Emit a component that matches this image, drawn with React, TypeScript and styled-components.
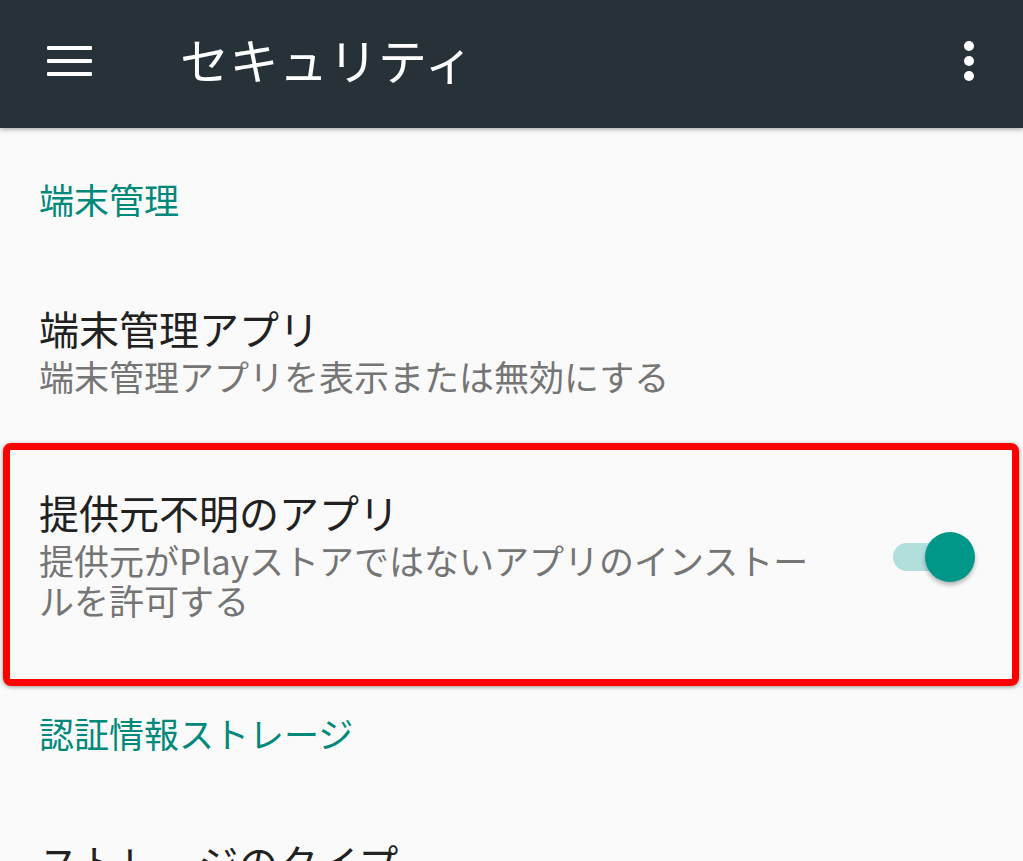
import React from 'react';
import styled, { createGlobalStyle } from 'styled-components';

const GlobalStyle = createGlobalStyle`
  html, body {
    margin: 0;
    padding: 0;
    background: #fafafa;
    overflow: hidden;
  }
  body {
    font-family: "Noto Sans CJK JP", "Roboto", sans-serif;
  }
`;

const Screen = styled.div`
  width: 1023px;
  height: 861px;
  background: #fafafa;
  overflow: hidden;
  display: flex;
  flex-direction: column;
`;

const Toolbar = styled.header`
  position: relative;
  z-index: 2;
  height: 128px;
  box-sizing: border-box;
  padding: 0 49px 6px 47px;
  background: #263238;
  box-shadow: 0 2px 4px rgba(0, 0, 0, 0.28);
  display: flex;
  align-items: center;
  flex-shrink: 0;
`;

const IconButton = styled.div`
  display: flex;
  align-items: center;
  justify-content: center;
  flex-shrink: 0;
`;

const ToolbarTitle = styled.h1`
  flex: 1;
  margin: -4px 0 0 88px;
  font-size: 49px;
  font-weight: 400;
  line-height: 60px;
  color: #ffffff;
  letter-spacing: 0.5px;
`;

const List = styled.div`
  padding-top: 9px;
  display: flex;
  flex-direction: column;
`;

const Category = styled.div`
  padding: 38px 39px 40px;
  font-size: 35px;
  line-height: 48px;
  color: #00897b;
`;

const Row = styled.div<{ $highlight?: boolean }>`
  position: relative;
  display: flex;
  align-items: center;
  padding: 41px 48px 51px 39px;

  ${props => props.$highlight && `
    &::after {
      content: '';
      position: absolute;
      top: -4px;
      bottom: -15px;
      left: 3px;
      right: 4px;
      border: 7px solid #ff0000;
      border-radius: 8px;
      box-shadow: 0 1px 4px rgba(0, 0, 0, 0.4);
      pointer-events: none;
    }
  `}
`;

const RowText = styled.div`
  flex: 1;
  min-width: 0;
  display: flex;
  flex-direction: column;
  gap: 4px;
`;

const RowTitle = styled.div`
  font-size: 40px;
  line-height: 48px;
  color: #212121;
`;

const RowSummary = styled.div`
  font-size: 35px;
  line-height: 40px;
  color: #757575;
`;

const SwitchFrame = styled.div`
  position: relative;
  width: 82px;
  height: 50px;
  margin-left: 70px;
  margin-top: 6px;
  flex-shrink: 0;
  display: flex;
  align-items: center;
`;

const SwitchTrack = styled.div<{ $on: boolean }>`
  width: 64px;
  height: 28px;
  border-radius: 14px;
  background: ${props => (props.$on ? '#b2dfdb' : '#bdbdbd')};
`;

const SwitchThumb = styled.div<{ $on: boolean }>`
  position: absolute;
  top: 0;
  left: ${props => (props.$on ? '32px' : '0')};
  width: 50px;
  height: 50px;
  border-radius: 50%;
  background: ${props => (props.$on ? '#009688' : '#f1f1f1')};
  box-shadow: 0 3px 4px rgba(0, 0, 0, 0.28);
`;

const MenuIcon = () => (
  <svg width="45" height="30" viewBox="0 0 45 30">
    <rect x="0" y="0" width="45" height="4" rx="1" fill="#fff" />
    <rect x="0" y="13" width="45" height="4" rx="1" fill="#fff" />
    <rect x="0" y="26" width="45" height="4" rx="1" fill="#fff" />
  </svg>
);

const MoreIcon = () => (
  <svg width="10" height="40" viewBox="0 0 10 40">
    <circle cx="5" cy="5" r="5" fill="#fff" />
    <circle cx="5" cy="20" r="5" fill="#fff" />
    <circle cx="5" cy="35" r="5" fill="#fff" />
  </svg>
);

const Switch: React.FC<{ on: boolean }> = ({ on }) => (
  <SwitchFrame>
    <SwitchTrack $on={on} />
    <SwitchThumb $on={on} />
  </SwitchFrame>
);

const App: React.FC = () => {
  return (
    <Screen>
      <GlobalStyle />
      <Toolbar>
        <IconButton>
          <MenuIcon />
        </IconButton>
        <ToolbarTitle>セキュリティ</ToolbarTitle>
        <IconButton>
          <MoreIcon />
        </IconButton>
      </Toolbar>

      <List>
        <Category>端末管理</Category>

        <Row>
          <RowText>
            <RowTitle>端末管理アプリ</RowTitle>
            <RowSummary>端末管理アプリを表示または無効にする</RowSummary>
          </RowText>
        </Row>

        <Row $highlight>
          <RowText>
            <RowTitle>提供元不明のアプリ</RowTitle>
            <RowSummary>
              提供元がPlayストアではないアプリのインストールを許可する
            </RowSummary>
          </RowText>
          <Switch on />
        </Row>

        <Category>認証情報ストレージ</Category>

        <Row>
          <RowText>
            <RowTitle>ストレージのタイプ</RowTitle>
          </RowText>
        </Row>
      </List>
    </Screen>
  );
};

export default App;
